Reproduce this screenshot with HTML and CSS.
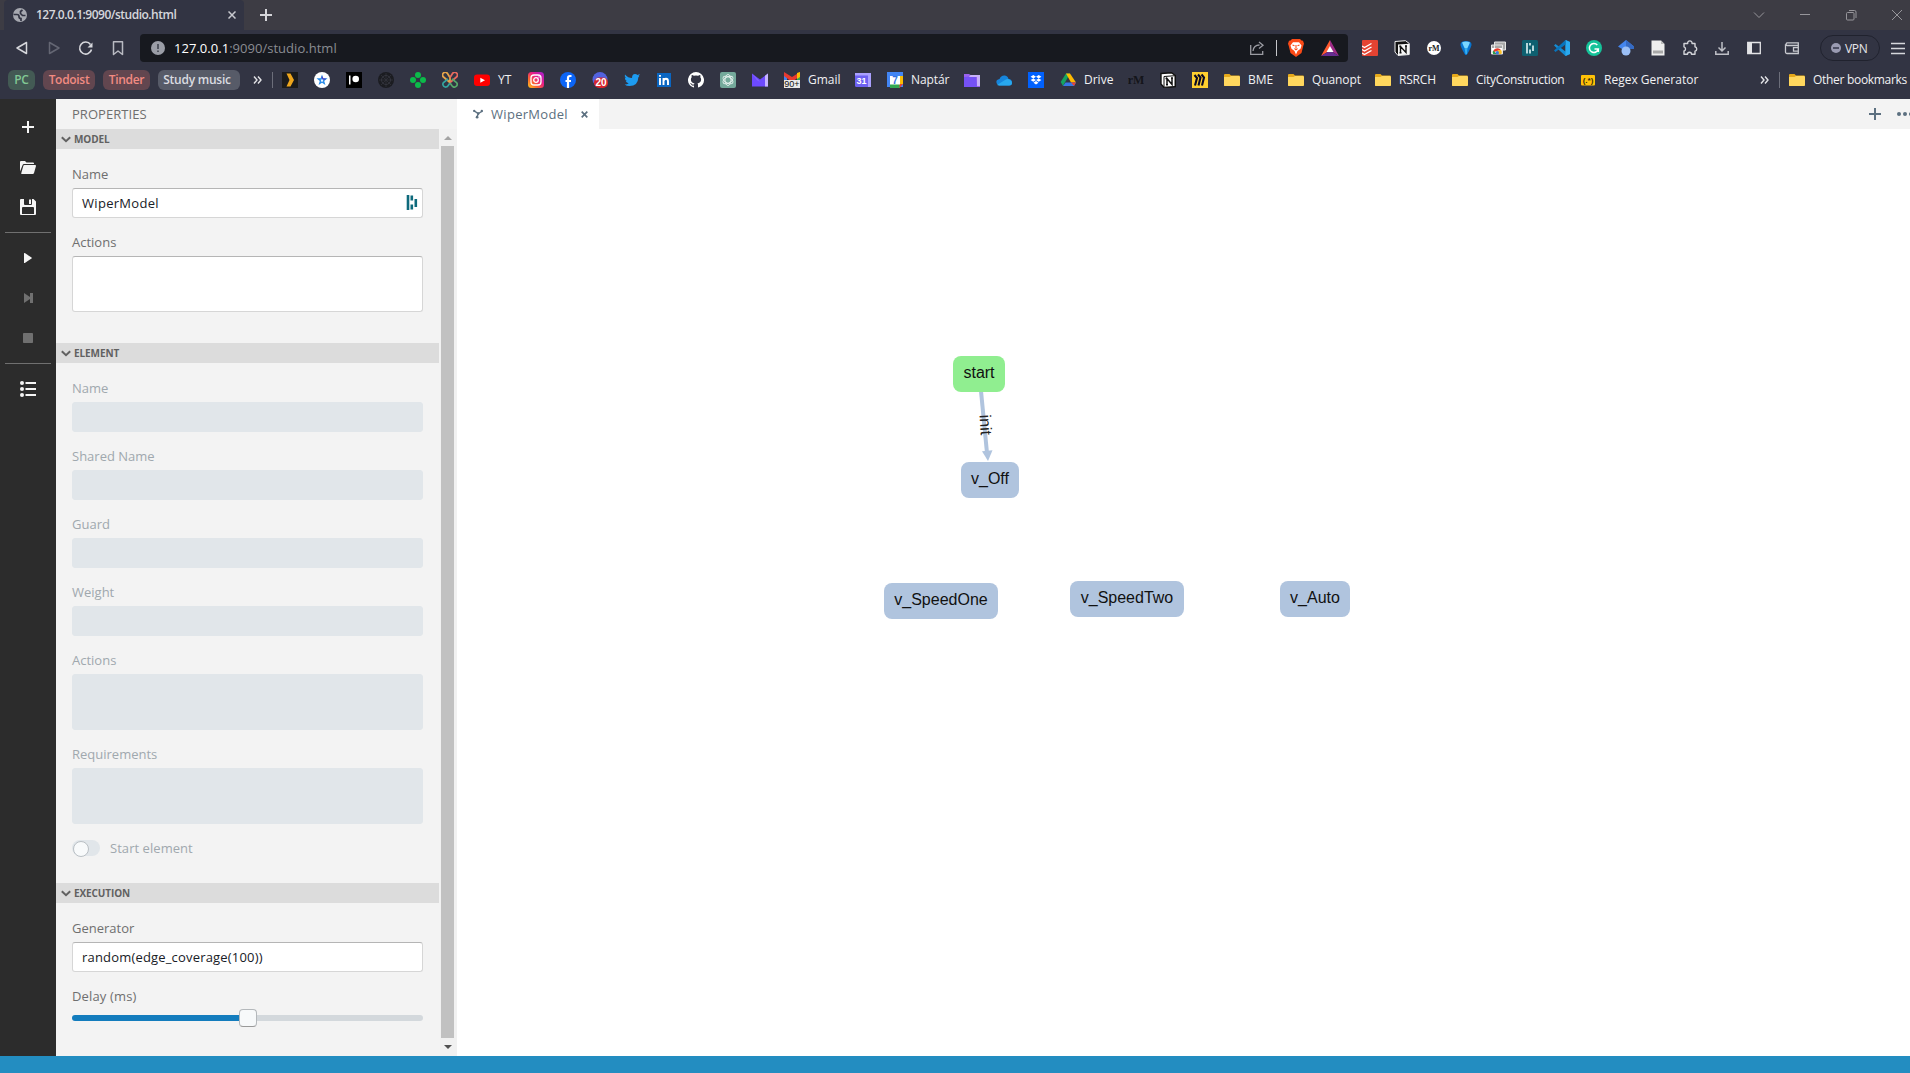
FILE: index.html
```html
<!DOCTYPE html>
<html lang="en">
<head>
<meta charset="utf-8">
<title>127.0.0.1:9090/studio.html</title>
<link rel="stylesheet" href="styles.css">
</head>
<body>
<div class="window">
  <header class="titlebar">
    <div class="browser-tab">
      <svg class="i16" viewBox="0 0 16 16"><circle cx="8" cy="8" r="7" fill="#a6a8b0"/><path d="M1.500 7.500H5q2 0 2 2t2 2v2.500M13.500 8.500H10.500L8.500 6.500V4.500L10.500 3" fill="none" stroke="#323443" stroke-width="1.700"/></svg>
      <span class="browser-tab-title">127.0.0.1:9090/studio.html</span>
      <svg class="i8" viewBox="0 0 8 8"><path d="M.5.5l7 7M7.500.5l-7 7" stroke="#c8c9cf" stroke-width="1.5"/></svg>
    </div>
    <svg class="new-tab" viewBox="0 0 12 12"><path d="M6 0v12M0 6h12" stroke="#d5d5d9" stroke-width="2"/></svg>
    <div class="window-controls">
      <svg viewBox="0 0 12 12"><path d="M1 3.500l5 5 5-5"/></svg>
      <svg viewBox="0 0 12 12"><path d="M1 5.500h10"/></svg>
      <svg viewBox="0 0 12 12"><rect x="1.500" y="3.500" width="7.500" height="7.500" rx="1"/><path d="M4 1.500h5.500a1.500 1.500 0 0 1 1.500 1.500v6"/></svg>
      <svg viewBox="0 0 12 12"><path d="M1 1l10 10M11 1l-10 10"/></svg>
    </div>
  </header>

  <nav class="toolbar">
    <div class="nav-buttons">
      <svg class="i16" viewBox="0 0 16 16"><path d="M12.500 2.500v11L3 8z" fill="none" stroke="#d6d7dc" stroke-width="1.5" stroke-linejoin="round"/></svg>
      <svg class="i16" viewBox="0 0 16 16"><path d="M3.500 2.500v11L13 8z" fill="none" stroke="#646673" stroke-width="1.5" stroke-linejoin="round"/></svg>
      <svg class="i16" viewBox="0 0 16 16"><path d="M13.500 9.500A6 6 0 1 1 12.500 4.500" fill="none" stroke="#d6d7dc" stroke-width="1.600"/><path d="M14.500 2.500v5h-5z" fill="#d6d7dc"/></svg>
      <svg class="i16" viewBox="0 0 16 16"><path d="M3.500 1.700h9v12.800L8 11l-4.500 3.500z" fill="none" stroke="#b9bac2" stroke-width="1.5" stroke-linejoin="round"/></svg>
    </div>
    <div class="address">
      <svg class="i14" viewBox="0 0 14 14"><circle cx="7" cy="7" r="7" fill="#9b9ea7"/><path d="M7 3v5M7 9.500v1.500" stroke="#454955" stroke-width="1.700"/></svg>
      <span class="url"><b>127.0.0.1</b>:9090/studio.html</span>
      <svg class="share i16" viewBox="0 0 16 16"><path d="M1.700 5v9.300h12V11M4 11c.5-4 3-6 6.500-6M10 2l4 3.200-4 3.300" fill="none" stroke="#9b9ca3" stroke-width="1.300"/></svg>
      <i class="divider"></i>
      <svg class="brave" viewBox="0 0 16 18"><path d="M4 0h8l1.500 1.500L15 1.800l1 3-.7 2L13.500 14 8 18l-5.500-4L.7 6.800l-.7-2 1-3 1.500-.3z" fill="#fb4a16"/><path d="M5 3.200h6l2.500 3.300-1 3.200L9.500 12 8 15.500 6.500 12l-3-2.300-1-3.200z" fill="#fff"/><path d="M4.500 6l2 .7M11.500 6l-2 .7M8 6v3M6.500 9.500L8 10.700l1.500-1.200" stroke="#fb4a16" stroke-width="1.100" fill="none"/></svg>
      <svg class="bat" viewBox="0 0 18 16"><path d="M9 0L0 16l9-5.500z" fill="#ff5a30"/><path d="M9 0l9 16-9-5.500z" fill="#9e2b87"/><path d="M0 16h18l-9-5.500z" fill="#662d91"/><path d="M9 6l3.500 6h-7z" fill="#fff"/></svg>
    </div>
    <div class="extensions">
      <svg viewBox="0 0 16 16"><rect width="16" height="16" rx="1" fill="#e44332"/><path d="M0 6l2.500 1.500L9.500 3.500M0 9.500L2.500 11l7-4M0 13l2.500 1.500 7-4" fill="none" stroke="#fff" stroke-width="1.300"/></svg>
      <svg viewBox="0 0 16 16"><path d="M1 1.500L11.500.7 15.300 3.500v11L4 15.500 1 12z" fill="#111" stroke="#eee"/><path d="M4 4.500l11-.8v10.800l-11 .7z" fill="#f5f5f5"/><path d="M6.500 12.500v-6l5.500 6v-6M5.300 6.500h2M11 6h2M5.500 12.800h2" fill="none" stroke="#111" stroke-width="1.400"/></svg>
      <svg viewBox="0 0 16 16"><circle cx="8" cy="8" r="7" fill="#fff"/><text x="8" y="10.500" class="t-rm-small">rM</text></svg>
      <svg viewBox="0 0 16 16"><path d="M2.500 4Q3 1 8 1t5.500 3Q14 6 8.800 15H7.200Q2 6 2.500 4z" fill="#0874d0"/><path d="M4 2.500Q8 .5 12 2.500L9.500 8h-3z" fill="#7ad6ff"/><path d="M6.500 8h3L9 14H7.500z" fill="#35aef0"/></svg>
      <svg viewBox="0 0 16 16"><path d="M4.500 2h11v8h-11zM1.500 5h11v9h-11z" fill="#a8a8a8" stroke="#e4e4e4"/><path d="M2 8h10v6H2z" fill="#fff"/><path d="M3 12.500a4.500 4.500 0 0 1 8-2.500l-4 1z" fill="#e53c2e"/><path d="M3 14a4.500 4.500 0 0 1 0-3.500L7 14z" fill="#2f9c49"/><path d="M7 14h4.500a4.500 4.500 0 0 0-.3-4H8z" fill="#f9bd25"/><circle cx="7.300" cy="12.700" r="1.700" fill="#3979df"/></svg>
      <svg viewBox="0 0 16 16"><rect width="16" height="16" rx="1.500" fill="#0e6070"/><path d="M5 3v10.500M8 3v2.500M8 9.500v4M11 5.500v5.500" stroke="#c9e4e7" stroke-width="1.800"/></svg>
      <svg viewBox="0 0 16 16"><path d="M11.500 0L16 2v12l-4.500 2L0 5.500 1.500 4l10 7.500v-7z" fill="#168bd2"/><path d="M11.500 0L16 2v12l-4.500 2z" fill="#2aa9ef"/><path d="M0 10.500L11.500 0v4.500L1.500 12z" fill="#0874bd"/></svg>
      <svg viewBox="0 0 16 16"><circle cx="8" cy="8" r="8" fill="#15c39a"/><path d="M11.300 5A4.500 4.500 0 1 0 12.300 9H8.500M12.300 9v3" fill="none" stroke="#fff" stroke-width="1.500"/></svg>
      <svg viewBox="0 0 16 16"><path d="M8 0L0 6.500 4 9h8l4-2.500z" fill="#4485ed"/><path d="M8 0l8 6.500V9H8z" fill="#356ac3"/><circle cx="8" cy="11" r="4.500" fill="#9bbff6"/></svg>
      <svg viewBox="0 0 16 16"><path d="M1.500.5H11L14.500 4v11.500h-13z" fill="#eee"/><path d="M11 .5V4h3.500z" fill="#bbb"/><path d="M3 10.500h10v3H3z" fill="#a8a8a8"/></svg>
      <svg viewBox="0 0 16 16"><path d="M2 3.500h3.700a2.200 2.200 0 1 1 4.300 0h3v3.300a2.200 2.200 0 0 1 0 4.300v3.200H9.500a2 2 0 0 0-4 0H2V11a2.200 2.200 0 0 0 0-4.200z" fill="none" stroke="#d2d3d8" stroke-width="1.400" stroke-linejoin="round"/></svg>
      <svg viewBox="0 0 16 16"><path d="M8 2v9M4.500 7.500L8 11l3.500-3.500M1.800 11v3.300h12.400V11" fill="none" stroke="#bfc0c7" stroke-width="1.500"/></svg>
      <svg viewBox="0 0 16 16"><path d="M1.700 2.500h12.600v11H1.700z" fill="none" stroke="#e3e3e6" stroke-width="1.300"/><path d="M2 2.500h4v11H2z" fill="#e3e3e6"/></svg>
    </div>
    <svg class="wallet i16" viewBox="0 0 16 16"><path d="M14.300 5V2.800H3a1.500 1.500 0 0 0 0 2.700h11.300v8H3a1.500 1.500 0 0 1-1.500-1.500V4.200M14.300 7.700H9.500v3.500h4.800" fill="none" stroke="#c8c9cf" stroke-width="1.300"/></svg>
    <div class="vpn"><svg class="i10" viewBox="0 0 10 10"><circle cx="5" cy="5" r="5" fill="#9a9bb2"/><path d="M2 5h6" stroke="#3a3c50" stroke-width="1.600"/></svg><span>VPN</span></div>
    <svg class="menu i14" viewBox="0 0 14 14"><path d="M0 2.500h14M0 7.500h14M0 12.500h14" stroke="#d6d7dc" stroke-width="1.400"/></svg>
  </nav>

  <nav class="bookmarks">
    <span class="chip chip-pc">PC</span>
    <span class="chip chip-red chip-todoist">Todoist</span>
    <span class="chip chip-red chip-tinder">Tinder</span>
    <span class="chip chip-study">Study music</span>
    <svg class="more" viewBox="0 0 9 8"><path d="M1 .5L4 4 1 7.500M5 .5L8 4 5 7.500"/></svg>
    <i class="divider"></i>
    <div class="bookmark-list">
      <svg viewBox="0 0 16 16"><path fill="#1b1b1b" d="M0 0h16v16H0z"/><path d="M4.500 1.500h4L12 8l-3.500 6.500h-4L7.500 8z" fill="#eda51c"/></svg>
      <svg viewBox="0 0 16 16"><circle cx="8" cy="8" r="8" fill="#fff"/><path d="M8 4.500l.9 2.500h2.800L9.500 8.800l.8 2.700L8 10l-2.300 1.500.8-2.700L4.300 7h2.800z" fill="none" stroke="#2589e8" stroke-width="1.300"/><path d="M8 4.500l.9 2.500h2.800" fill="none" stroke="#6032b8"/></svg>
      <svg viewBox="0 0 16 16"><path d="M0 0h16v16H0z"/><path fill="#fff" d="M3 3.500h1.500v9H3z"/><circle cx="9.700" cy="7" r="3.300" fill="#fff"/></svg>
      <svg viewBox="0 0 16 16"><circle cx="8" cy="8" r="8" fill="#1b1c21"/><path d="M8 1v14M1 8h14M3 3l10 10M13 3L3 13" stroke="#34353e" stroke-width=".7"/><circle cx="8" cy="8" r="4.500" fill="none" stroke="#34353e"/></svg>
      <svg viewBox="0 0 16 16" fill="#0cba4a"><circle cx="8" cy="3" r="3"/><circle cx="3" cy="8" r="3"/><circle cx="13" cy="8" r="3"/><circle cx="8" cy="13" r="3"/></svg>
      <svg viewBox="0 0 16 16" fill="none" stroke-width="1.700"><path d="M8 12V5.500L5.800 2A2.700 2.700 0 1 0 1.500 5L8 10.500" stroke="#e7a54a"/><path d="M8 5.500L10.200 2a2.700 2.700 0 1 1 4.300 3L8 10.500" stroke="#e86b5f"/><path d="M10 7l4.500 3.500a2.700 2.700 0 1 1-4.300 3.500L8 11" stroke="#57a86a"/><path d="M6 7l-4.500 3.500A2.700 2.700 0 1 0 5.800 14L8 11" stroke="#35a6a1"/></svg>
      <a class="bookmark"><svg viewBox="0 0 16 16"><rect y="2.500" width="16" height="11.500" rx="3" fill="#f00"/><path d="M6.300 5.700L11 8.200l-4.700 2.500z" fill="#fff"/></svg><span class="w-yt">YT</span></a>
      <svg viewBox="0 0 16 16"><defs><linearGradient id="insta" x1="0" y1="1" x2="1" y2="0"><stop offset="0" stop-color="#ffc823"/><stop offset=".3" stop-color="#fb692c"/><stop offset=".6" stop-color="#e91d87"/><stop offset="1" stop-color="#a020d5"/></linearGradient></defs><rect width="16" height="16" rx="3.500" fill="url(#insta)"/><g fill="none" stroke="#fff" stroke-width="1.300"><rect x="3" y="3" width="10" height="10" rx="3"/><circle cx="8" cy="8" r="2.300"/></g><circle cx="11" cy="5" r=".7" fill="#fff"/></svg>
      <svg viewBox="0 0 16 16"><circle cx="8" cy="8" r="8" fill="#0c65f6"/><path d="M11.500 4H10q-2 0-2 2v10M5.500 9h5.500" fill="none" stroke="#fff" stroke-width="2.200"/></svg>
      <svg viewBox="0 0 16 16"><circle cx="8" cy="7.500" r="7.500" fill="#5262de"/><rect x="2" y="5.500" width="14" height="10.500" rx="5" fill="#d6262d"/><text x="9" y="14.300" class="t-badge">20</text></svg>
      <svg viewBox="0 0 16 16"><path d="M1 2.500q3 3.500 7 3.500Q8 2 11 2q1.500 0 2.500 1L16 2l-1.500 2 1-.2L14.300 5.500Q14 14 5.500 14 2.500 14 .7 12.500q2.500 0 4-1.200-2.200-.3-3-2.300h1.200Q.8 8 .8 5.500l1.200.4Q0 4.300 1 2.500z" fill="#1d9bf0"/></svg>
      <svg viewBox="0 0 16 16"><path d="M1 1h14v14H1z" fill="#0a66c2"/><path d="M4 6v7M4 3v1.800M7.500 13V6M7.500 9Q8 6.700 10 6.700t2 2.500V13" fill="none" stroke="#fff" stroke-width="1.900"/></svg>
      <svg viewBox="0 0 16 16"><path d="M8 0a8 8 0 0 0-2.500 15.600c.4 0 .5-.2.5-.5v-1.500c-2.200.5-2.700-1-2.700-1-.4-.9-.9-1.200-.9-1.200-.7-.5.100-.5.100-.5.800.1 1.200.8 1.200.8.700 1.300 1.900.9 2.300.7.100-.5.300-.9.500-1.100-1.700-.2-3.600-.9-3.600-4 0-.9.300-1.600.8-2.100 0-.3-.3-1.100.1-2.200 0 0 .7-.2 2.200.8a8 8 0 0 1 4 0c1.500-1 2.200-.8 2.200-.8.4 1.100.1 1.900.1 2.200.5.500.8 1.200.8 2.100 0 3.100-1.900 3.800-3.700 4 .3.300.6.800.6 1.500v2.300c0 .3.100.5.500.5A8 8 0 0 0 8 0z" fill="#fff"/></svg>
      <svg viewBox="0 0 16 16"><rect width="16" height="16" rx="2" fill="#74a99b"/><g fill="none" stroke="#e6f1ee" stroke-width=".9"><ellipse cx="8" cy="8" rx="3" ry="5.500"/><ellipse cx="8" cy="8" rx="3" ry="5.500" transform="rotate(60 8 8)"/><ellipse cx="8" cy="8" rx="3" ry="5.500" transform="rotate(120 8 8)"/></g></svg>
      <svg viewBox="0 0 16 16"><path d="M0 1.500l8 6 8-6v13H0z" fill="#6d4aff"/><path d="M13 3.700l3-2.200v13h-3z" fill="#c6b5ff"/><path d="M0 1.500L8 10 5 8z" fill="#8e70ff"/></svg>
      <a class="bookmark"><svg viewBox="0 0 16 16"><path fill="#4285f4" d="M0 2h3v6H0z"/><path fill="#34a853" d="M13 2h3v6h-3z"/><path d="M0 0l8 5 8-5v4L8 10 0 4z" fill="#e83a2f"/><path fill="#fbbc04" d="M13 1l3-1v5l-3 2z"/><path fill="#e8e8e8" d="M0 8h16v8H0z"/><text x="8" y="15" class="t-count">90+</text></svg><span class="w-gmail">Gmail</span></a>
      <svg viewBox="0 0 16 16"><rect x="0" y="1" width="16" height="14" rx="1.500" fill="#6d61f1"/><path d="M0 1h16v2.500H0zM13 1h3v14h-3z" fill="#aaa0ff"/><text x="6.500" y="12" class="t-31">31</text></svg>
      <a class="bookmark"><svg viewBox="0 0 16 16"><path d="M0 0h16v15H0z" fill="#4285f4"/><path d="M12.500 4H16v8h-3.500z" fill="#fbbc04"/><path d="M3 12h10v4H3z" fill="#34a853"/><path d="M12.500 12H16l-3.500 4z" fill="#ea4335"/><path d="M3 4h10v8.500H3z" fill="#fff"/><text x="8" y="12" class="t-7">7</text></svg><span class="w-naptar">Naptár</span></a>
      <svg viewBox="0 0 16 16"><path d="M0 2h5l1.500 1H16v12H0z" fill="#9a62ed"/><path d="M0 5l12-1 1 11H0z" fill="#7551f5"/><path d="M6.500 3H16v11h-3V5H5z" fill="#c8b1f8"/></svg>
      <svg viewBox="0 0 16 16"><path d="M1 12Q-1 8 3.500 7 5 3 9 3.500q3 .5 3.500 3.500 3.500 0 3.500 3.500T13 13.500H3z" fill="#1685dc"/><path d="M1 13l8-5q3-2 5 0 2 1 2 3t-3 2.500H3z" fill="#28a8ee"/></svg>
      <svg viewBox="0 0 16 16"><path d="M0 0h16v16H0z" fill="#0061fe"/><path d="M5.300 3L8 4.700 5.300 6.400 2.600 4.700zM10.700 3l2.700 1.700-2.700 1.700L8 4.700zM5.300 6.400L8 8.100 5.300 9.800 2.600 8.100zM10.700 6.400l2.700 1.700-2.700 1.700L8 8.100zM8 9l2.500 1.700L8 12.500l-2.500-1.800z" fill="#fff"/></svg>
      <a class="bookmark"><svg viewBox="0 0 16 16"><path d="M6 1.500h4L3 14 .700 10z" fill="#15a35f"/><path d="M6 1.500h4l6 9h-5z" fill="#ffba00"/><path d="M5.500 10.500H16L14 14H3z" fill="#3777e3"/><path d="M11 10.500h5L14 14z" fill="#ea4335"/></svg><span class="w-drive">Drive</span></a>
      <svg viewBox="0 0 16 16"><text x="8" y="12" class="t-rm">rM</text></svg>
      <svg viewBox="0 0 16 16"><path d="M1 1.500L11.500.7 15.300 3.500v11L4 15.500 1 12z" fill="#fff" stroke="#111" stroke-width="1.400"/><path d="M4 4.500l11-.8v10.800l-11 .7z" fill="#fff" stroke="#111"/><path d="M7 12.500v-6l5 6v-6M5.500 6.500h2M11 6h2M6 12.800h2" fill="none" stroke="#111" stroke-width="1.500"/></svg>
      <svg viewBox="0 0 16 16"><path d="M0 0h16v16H0z" fill="#ffd02f"/><path d="M2.500 3L5 6 3 13.500M6 2.500l2.500 3-2 8M9.500 2.500l2.500 3-2 8" fill="none" stroke="#080824" stroke-width="2.100"/></svg>
      <a class="bookmark"><svg viewBox="0 0 16 16"><use href="#folder"/></svg><span class="w-bme">BME</span></a>
      <a class="bookmark"><svg viewBox="0 0 16 16"><use href="#folder"/></svg><span class="w-quanopt">Quanopt</span></a>
      <a class="bookmark"><svg viewBox="0 0 16 16"><use href="#folder"/></svg><span class="w-rsrch">RSRCH</span></a>
      <a class="bookmark"><svg viewBox="0 0 16 16"><use href="#folder"/></svg><span class="w-city">CityConstruction</span></a>
      <a class="bookmark"><svg viewBox="0 0 16 16"><rect x="1" y="3" width="14" height="10.500" rx="1" fill="#ffc107"/><text x="8" y="11" class="t-regex">(.*)</text></svg><span class="w-regex">Regex Generator</span></a>
    </div>
    <svg class="more more-right" viewBox="0 0 9 8"><path d="M1 .5L4 4 1 7.500M5 .5L8 4 5 7.500"/></svg>
    <i class="divider"></i>
    <a class="bookmark other"><svg viewBox="0 0 16 16"><defs><g id="folder"><path d="M0 3q0-1 1-1h4.500L7 3.500h8.500V14H0z" fill="#e6a91b"/><path d="M0 5h5.500L7 4h8q1 0 1 1v8q0 1-1 1H1q-1 0-1-1z" fill="#ffd75e"/></g></defs><use href="#folder"/></svg><span class="w-other">Other bookmarks</span></a>
  </nav>

  <main class="studio">
    <aside class="rail">
      <svg class="rail-plus" viewBox="0 0 16 16"><path d="M8 2v12M2 8h12" stroke-width="2"/></svg>
      <svg class="rail-open" viewBox="0 0 16 16"><path class="solid" d="M0 12.500V3q0-1 1-1h4l1.500 1.500H13q1 0 1 1V5H4Q3 5 2.600 6z"/><path class="solid" d="M4.500 6H15q1.200 0 1 1l-2 7q-.3 1-1.200 1H2q-1 0-.7-1l2-7q.2-1 1.200-1z"/></svg>
      <svg class="rail-save" viewBox="0 0 16 16"><path class="solid" fill-rule="evenodd" d="M0 1q0-1 1-1h3v5q0 1 1 1h6q1 0 1-1V0h1.500L16 2.500V15q0 1-1 1h-1v-7q0-1-1-1H3Q2 8 2 9v7H1q-1 0-1-1zM9 .5h2V5H9zM2 15h12v1H2z"/></svg>
      <hr>
      <svg class="rail-play" viewBox="0 0 16 16"><path class="solid" d="M4 3.500q0-.8.8-.4l6.700 4.300q.7.600 0 1.200l-6.700 4.300q-.8.400-.8-.4z"/></svg>
      <svg class="rail-step off" viewBox="0 0 16 16"><path class="solid" d="M4 3l6 4V3h3v10h-3V9l-6 4z"/></svg>
      <svg class="rail-stop off" viewBox="0 0 16 16"><rect class="solid" x="3" y="3" width="10" height="10" rx=".8"/></svg>
      <hr>
      <svg class="rail-list" viewBox="0 0 16 16"><path d="M5.500 2H16M5.500 8H16M5.500 14H16" stroke-width="2"/><g class="solid"><circle cx="2" cy="2" r="2"/><circle cx="2" cy="8" r="2"/><circle cx="2" cy="14" r="2"/></g></svg>
    </aside>

    <section class="properties">
      <h1>PROPERTIES</h1>
      <div class="scroll-area">
        <div class="sections">
          <h2><svg viewBox="0 0 10 7"><path d="M.8 1.200L5 5.200l4.200-4"/></svg><span>MODEL</span></h2>
          <div class="form">
            <label>Name</label>
            <div class="field"><span class="value-name">WiperModel</span><svg class="dashlane" viewBox="0 0 12 16"><path d="M2 0v15M5.800 .5v5M5.800 9.500v5M9.800 4v8"/></svg></div>
            <label>Actions</label>
            <div class="field tall"></div>
          </div>
          <h2><svg viewBox="0 0 10 7"><path d="M.8 1.200L5 5.200l4.200-4"/></svg><span>ELEMENT</span></h2>
          <div class="form disabled">
            <label>Name</label><div class="field"></div>
            <label>Shared Name</label><div class="field"></div>
            <label>Guard</label><div class="field"></div>
            <label>Weight</label><div class="field"></div>
            <label>Actions</label><div class="field tall"></div>
            <label>Requirements</label><div class="field tall"></div>
            <div class="switch-row"><i class="switch"></i><span>Start element</span></div>
          </div>
          <h2><svg viewBox="0 0 10 7"><path d="M.8 1.200L5 5.200l4.200-4"/></svg><span>EXECUTION</span></h2>
          <div class="form">
            <label>Generator</label>
            <div class="field"><span class="value-generator">random(edge_coverage(100))</span></div>
            <label class="wide">Delay (ms)</label>
            <div class="slider"><i class="slider-fill"></i><i class="slider-handle"></i><i class="slider-rest"></i></div>
          </div>
        </div>
        <div class="scrollbar">
          <svg viewBox="0 0 8 4"><path d="M4 0l4 4H0z" fill="#a3a3a3"/></svg>
          <i class="thumb"></i>
          <svg viewBox="0 0 8 4"><path d="M0 0h8L4 4z" fill="#505050"/></svg>
        </div>
      </div>
    </section>

    <section class="editor">
      <div class="editor-tabs">
        <div class="editor-tab">
          <svg class="graph-icon" viewBox="0 0 11 10"><path d="M1 1.500l5 3 4-2.500M6 4.500L4 9" fill="none" stroke="#5c7080" stroke-width="1.500"/><g fill="#5c7080"><circle cx="1.300" cy="1.500" r="1.300"/><circle cx="9.700" cy="1.700" r="1.300"/><circle cx="4.500" cy="8.500" r="1.500"/><circle cx="5.700" cy="4.500" r="1.500"/></g></svg>
          <span>WiperModel</span>
          <svg class="tab-close" viewBox="0 0 7 7"><path d="M.7.7l5.600 5.600M6.300.7L.7 6.300" stroke="#5c7080" stroke-width="1.700"/></svg>
        </div>
        <svg class="add" viewBox="0 0 12 12"><path d="M6 0v12M0 6h12" stroke="#5c7080" stroke-width="2"/></svg>
        <svg class="dots" viewBox="0 0 13 4" fill="#5c7080"><circle cx="2" cy="2" r="2"/><circle cx="8" cy="2" r="2"/><circle cx="14" cy="2" r="2"/></svg>
      </div>
      <div class="canvas">
        <svg class="edge" viewBox="0 0 40 72"><path d="M14 0l6 62" stroke="#b0c4de" stroke-width="4"/><path d="M15 60.200l10.500-.9L21 70z" fill="#b0c4de"/><text class="edge-label" transform="translate(12.500 24) rotate(86)">init</text></svg>
        <div class="node node-start">start</div>
        <div class="node node-off">v_Off</div>
        <div class="node node-one">v_SpeedOne</div>
        <div class="node node-two">v_SpeedTwo</div>
        <div class="node node-auto">v_Auto</div>
      </div>
    </section>
  </main>
  <footer class="statusbar"></footer>
</div>
</body>
</html>
```
FILE: styles.css
```css
* { box-sizing: border-box; }
body {
  margin: 0;
  overflow: hidden;
  font-family: "Open Sans", "Noto Sans", sans-serif;
  font-size: 13px;
}
svg { display: block; flex: none; }
.window {
  display: flex;
  flex-direction: column;
  width: 1910px;
  height: 1073px;
}
.i16 { width: 16px; height: 16px; }
.i14 { width: 14px; height: 14px; }
.i10 { width: 10px; height: 10px; }
.i8 { width: 8px; height: 8px; }

/* Title bar */
.titlebar {
  display: flex;
  align-items: center;
  height: 30px;
  padding-left: 4px;
  background: #3d3c44;
}
.browser-tab {
  display: flex;
  align-items: center;
  width: 240px;
  height: 30px;
  padding: 0 8px;
  background: #323443;
  border-radius: 4px 4px 0 0;
}
.browser-tab-title {
  flex: 1;
  padding-left: 8px;
  color: #d6d7dc;
  font-size: 12px;
  font-weight: 600;
  letter-spacing: -.5px;
  line-height: 28px;
  white-space: nowrap;
}
.new-tab { width: 12px; height: 12px; margin-left: 16px; }
.window-controls {
  display: flex;
  gap: 34px;
  margin-left: auto;
  padding-right: 7px;
}
.window-controls svg {
  width: 12px;
  height: 12px;
  fill: none;
  stroke: #97969b;
  stroke-width: 1;
}

/* Toolbar */
.toolbar {
  display: flex;
  align-items: center;
  height: 36px;
  padding: 0 4px 0 14px;
  background: #323443;
}
.nav-buttons { display: flex; gap: 16px; width: 126px; }
.address {
  display: flex;
  align-items: center;
  width: 1208px;
  height: 28px;
  padding: 0 9px 0 11px;
  background: #17191f;
  border-radius: 4px;
}
.url {
  padding-left: 9px;
  color: #8a8c92;
  font-size: 13px;
  letter-spacing: .03px;
  white-space: nowrap;
}
.url b { color: #fff; font-weight: 400; }
.share { margin-left: auto; }
.divider { width: 1px; height: 16px; background: #6c6e7a; flex: none; }
.address .divider { margin: 0 11px; background: #c5c6ca; }
.brave { width: 16px; height: 18px; }
.bat { width: 18px; height: 16px; margin-left: 17px; }
.extensions { display: flex; gap: 16px; margin-left: 14px; }
.extensions svg { width: 16px; height: 16px; }
.wallet { margin-left: 22px; }
.vpn {
  display: flex;
  align-items: center;
  gap: 4px;
  width: 60px;
  height: 26px;
  margin-left: 20px;
  padding-left: 10px;
  border: 1px solid #20222e;
  border-radius: 13px;
  color: #e6e6ea;
  font-size: 12px;
  font-weight: 500;
}
.vpn span { letter-spacing: -.3px; }
.menu { margin-left: 11px; }

/* Bookmarks bar */
.bookmarks {
  display: flex;
  align-items: center;
  height: 33px;
  padding: 0 0 5px 8px;
  background: #323443;
  font-size: 12px;
  color: #f1f1f3;
}
.chip {
  height: 20px;
  margin-right: 8px;
  border-radius: 6px;
  font-weight: 600;
  line-height: 19px;
  text-align: center;
  white-space: nowrap;
  flex: none;
  letter-spacing: -.3px;
}
.chip-pc { width: 27px; background: #435a54; color: #81c995; }
.chip-red { background: #62464f; color: #f28b82; }
.chip-todoist { width: 52px; }
.chip-tinder { width: 47px; }
.chip-study { width: 82px; padding-right: 4px; background: #575b68; color: #dadce0; letter-spacing: -.25px; }
.more {
  width: 9px;
  height: 8px;
  margin: 0 10px 0 5px;
  fill: none;
  stroke: #e3e3e7;
  stroke-width: 1.4;
}
.bookmark-list { display: flex; gap: 16px; margin-left: 9px; }
.bookmark-list svg, .bookmark svg { width: 16px; height: 16px; }
.bookmark { display: flex; align-items: center; height: 16px; }
.bookmark span {
  margin-left: 8px;
  white-space: nowrap;
  line-height: 16px;
}
.w-yt { width: 14px; }
.w-gmail { width: 31px; }
.w-naptar { width: 37px; letter-spacing: -.1px; }
.w-drive { width: 28px; }
.w-bme { width: 24px; }
.w-quanopt { width: 47px; letter-spacing: -.1px; }
.w-rsrch { width: 37px; letter-spacing: -.2px; }
.w-city { width: 88px; letter-spacing: -.28px; }
.w-regex { width: 89px; }
.w-other { width: 93px; letter-spacing: -.3px; }
.more-right { margin-left: auto; }
.other { margin: 0 4px 0 9px; }
text { text-anchor: middle; font-family: "Liberation Sans", sans-serif; }
.t-rm-small { font: bold 8px "Liberation Serif", serif; fill: #222; }
.t-badge { font-size: 10px; font-weight: bold; fill: #fff; }
.t-count { font-size: 9px; fill: #111; }
.t-31 { font-size: 9px; font-weight: bold; fill: #fff; }
.t-7 { font-size: 10px; font-weight: bold; fill: #3572df; }
.t-rm { font: bold 12px "Liberation Serif", serif; fill: #14151a; }
.t-regex { font-size: 8px; font-weight: bold; fill: #33290a; }

/* Studio */
.studio { display: flex; flex: 1; min-height: 0; }
.rail {
  display: flex;
  flex-direction: column;
  align-items: center;
  width: 56px;
  background: #2c2c2c;
}
.rail svg { width: 16px; height: 16px; stroke: #f5f5f5; }
.rail .solid { fill: #f5f5f5; stroke: none; }
.rail .off .solid { fill: #707070; }
.rail hr { width: 46px; height: 1px; margin: 0; border: 0; background: #707070; }
.rail-plus { margin-top: 20px; }
.rail-open { margin-top: 24px; }
.rail-save { margin-top: 24px; }
.rail-save + hr { margin-top: 17px; }
.rail-play { margin-top: 17px; }
.rail-step { margin-top: 24px; }
.rail-stop { margin-top: 24px; }
.rail-stop + hr { margin-top: 17px; }
.rail-list { margin-top: 17px; }

.properties {
  display: flex;
  flex-direction: column;
  width: 401px;
  background: #f3f3f3;
  color: #6f6f6f;
}
h1 {
  height: 30px;
  margin: 0;
  padding-left: 16px;
  font-size: 13px;
  font-weight: 400;
  letter-spacing: .05px;
  line-height: 30px;
}
.scroll-area { display: flex; gap: 1px; height: 927px; }
.sections { width: 383px; }
h2 {
  display: flex;
  align-items: center;
  gap: 3px;
  height: 20px;
  margin: 0;
  padding-left: 5px;
  background: #dcdcdc;
  color: #616161;
  font-size: 10px;
  font-weight: 700;
  letter-spacing: -.1px;
}
h2 svg { width: 10px; height: 7px; fill: none; stroke: #616161; stroke-width: 2; }
.form { padding: 16px 16px; font-size: 13px; }
.form:first-of-type { height: 194px; }
label { display: block; height: 18px; margin-bottom: 5px; line-height: 18px; }
.wide { letter-spacing: .15px; }
.field {
  display: flex;
  align-items: center;
  justify-content: space-between;
  width: 351px;
  height: 30px;
  margin-bottom: 15px;
  padding: 0 4px 0 9px;
  background: #fff;
  border: 1px solid #d6d6d6;
  border-top-color: #b5b5b5;
  border-radius: 3px;
  color: #182026;
}
.value-name { letter-spacing: .3px; }
.value-generator { letter-spacing: .18px; }
.tall { height: 56px; }
.dashlane { width: 12px; height: 16px; fill: none; stroke: #0e6a7c; stroke-width: 2.6; }
.disabled { height: 520px; color: #a0a8ae; }
.disabled .field { background: #e1e6ea; border-color: #e1e6ea; }
.switch-row { display: flex; align-items: center; gap: 10px; height: 16px; margin-top: 16px; letter-spacing: .05px; }
.switch {
  width: 28px;
  height: 16px;
  padding: 1px;
  border-radius: 8px;
  background: #e1e6ea;
}
.switch::before {
  content: "";
  display: block;
  width: 14px;
  height: 14px;
  border: 1px solid #b9bfc4;
  border-radius: 50%;
  background: #f8fafb;
}
.slider { display: flex; align-items: center; height: 18px; margin-top: -1px; }
.slider-fill { width: 167px; height: 6px; background: #137cbd; border-radius: 3px 0 0 3px; }
.slider-handle {
  width: 18px;
  height: 18px;
  border: 1px solid #b4b8bb;
  border-bottom-color: #999;
  border-radius: 4px;
  background: #f7f9fa;
}
.slider-rest { flex: 1; height: 6px; background: #d3d8dc; border-radius: 0 3px 3px 0; }
.scrollbar {
  display: flex;
  flex-direction: column;
  align-items: center;
  width: 17px;
  padding: 7px 3px 8px 1px;
  background: #f1f1f1;
}
.scrollbar svg { width: 8px; height: 4px; }
.thumb { width: 13px; height: 892px; margin: 6px 0 7px; background: #c1c1c1; flex: none; }

/* Editor */
.editor { display: flex; flex: 1; flex-direction: column; background: #fff; }
.editor-tabs {
  display: flex;
  align-items: center;
  height: 30px;
  background: #f3f3f3;
  color: #5c7080;
}
.editor-tab {
  display: flex;
  align-items: center;
  width: 142px;
  height: 30px;
  padding-left: 16px;
  background: #fff;
}
.graph-icon { width: 10px; height: 10px; }
.editor-tab span { width: 98px; padding-left: 8px; letter-spacing: .3px; }
.tab-close { width: 7px; height: 7px; }
.editor-tab + .add { width: 12px; height: 12px; margin-left: auto; }
.dots { width: 13px; height: 4px; margin-left: 16px; }

/* Model graph, free canvas */
.canvas { position: relative; flex: 1; font-family: "Liberation Sans", Arial, sans-serif; font-size: 16px; }
.node {
  position: absolute;
  height: 36px;
  border-radius: 8px;
  background: #b0c4de;
  color: #111;
  line-height: 33px;
  text-align: center;
}
.node-start { left: 496px; top: 227px; width: 52px; background: #90ee90; }
.node-off { left: 504px; top: 333px; width: 58px; }
.node-one { left: 427px; top: 454px; width: 114px; }
.node-two { left: 613px; top: 452px; width: 114px; }
.node-auto { left: 823px; top: 452px; width: 70px; }
.edge { position: absolute; left: 510px; top: 262px; width: 40px; height: 72px; }
.edge-label { font-size: 16px; fill: #222; text-anchor: start; }

.statusbar { height: 17px; background: #238dc1; }
```
